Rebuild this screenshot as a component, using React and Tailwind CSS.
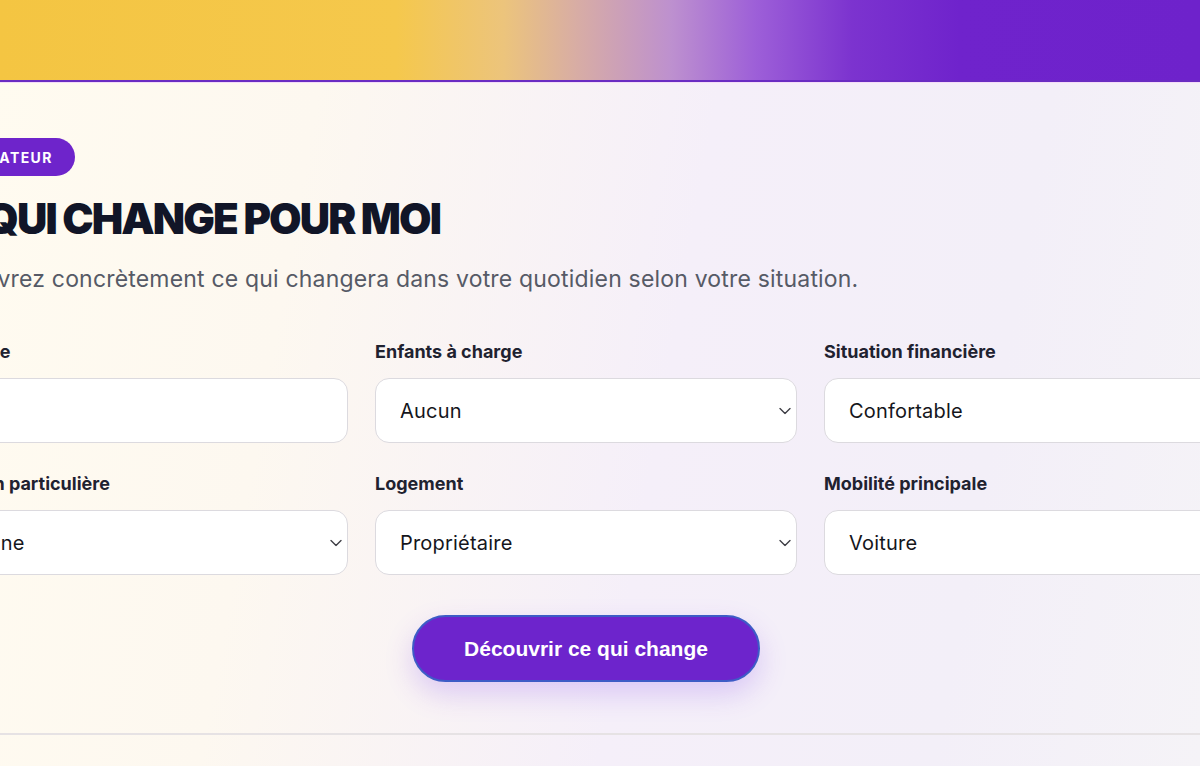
import React from "react";

function Chevron() {
  return (
    <svg
      className="absolute right-[5px] top-1/2 -translate-y-1/2"
      width="12"
      height="7"
      viewBox="0 0 12 7"
      fill="none"
    >
      <path d="M1 1l5 5 5-5" stroke="#3f3f46" strokeWidth="1.4" strokeLinecap="round" strokeLinejoin="round" />
    </svg>
  );
}

function Field({ label, value, select = true }) {
  return (
    <div className="flex flex-col">
      <div className="text-[18px] leading-[24px] font-bold text-[#1f2230] mb-[14px] whitespace-nowrap">{label}</div>
      <div className="relative h-[65px] rounded-[14px] border border-[#dcdadf] bg-white flex items-center pl-[24px]">
        <span className="text-[20px] tracking-[0.01em] text-[#15161c] whitespace-nowrap">{value}</span>
        {select && <Chevron />}
      </div>
    </div>
  );
}

export default function App() {
  return (
    <div
      className="relative w-[1200px] h-[766px] overflow-hidden bg-[linear-gradient(100deg,#fffbf0_0%,#fdf8f0_25%,#f5eff9_55%,#f3eff8_80%,#f5f3f7_100%)]"
      style={{ fontFamily: "Inter, 'Noto Sans', sans-serif" }}
    >
      <div className="h-[82px] border-b-2 border-[#6a2cc2] bg-[linear-gradient(90deg,#f4c542_0%,#f5c84c_33%,#ecc47c_42%,#d8ada4_48%,#bd90cf_56%,#9d5fd8_63%,#7c33cf_71%,#6f23cc_80%,#6e22cb_100%)]" />
      <div className="h-px bg-[#f4dcf8]" />

      <div className="w-[1320px] ml-[-74px] pt-[55px]">
        <div className="inline-flex items-center h-[38px] px-[22px] rounded-full bg-[#6e24cb]">
          <span className="text-[14px] font-bold tracking-[0.1em] text-white">SIMULATEUR</span>
        </div>

        <h1 className="mt-[20px] text-[42px] leading-[46px] font-black tracking-[-0.045em] text-[#111527] whitespace-nowrap">
          CE QUI CHANGE POUR MOI
        </h1>

        <p className="mt-[22px] text-[23px] leading-[30px] tracking-[0.008em] text-[#565a66] whitespace-nowrap">
          Découvrez concrètement ce qui changera dans votre quotidien selon votre situation.
        </p>

        <div className="mt-[46px] grid grid-cols-3 gap-x-[27px] gap-y-[29px]">
          <Field label="Votre âge" value="35" select={false} />
          <Field label="Enfants à charge" value="Aucun" />
          <Field label="Situation financière" value="Confortable" />
          <Field label="Situation particulière" value="Aucune" />
          <Field label="Logement" value="Propriétaire" />
          <Field label="Mobilité principale" value="Voiture" />
        </div>

        <div className="mt-[40px] flex justify-center">
          <button
            className="w-[348px] h-[67px] rounded-full bg-[#6d24cc] border-2 border-[#3d5cc6] text-white text-[21px] font-bold shadow-[0_12px_28px_rgba(124,58,237,0.22)]"
            style={{ fontFamily: "'Liberation Sans', Arial, sans-serif" }}
          >
            Découvrir ce qui change
          </button>
        </div>
      </div>

      <div className="absolute left-0 right-0 top-[733px] h-[2px] bg-[#e6e2e4]" />
    </div>
  );
}
